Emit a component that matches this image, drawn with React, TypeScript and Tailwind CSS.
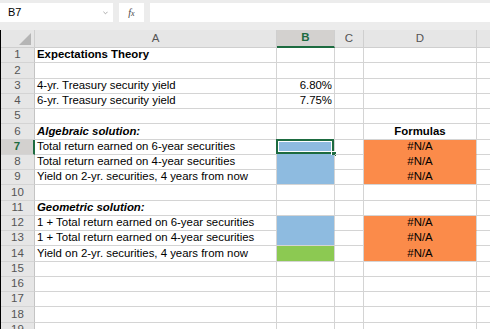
import React from 'react';

type Cell = { text?: string; bold?: boolean; italic?: boolean; align?: 'left' | 'right' | 'center'; fill?: string };
type Row = { a?: Cell; b?: Cell; c?: Cell; d?: Cell };

const BLUE = '#8ebbe0';
const ORANGE = '#fb8b4a';
const GREEN = '#8cc952';

const rows: Row[] = [
  { a: { text: 'Expectations Theory', bold: true } },
  {},
  { a: { text: '4-yr. Treasury security yield' }, b: { text: '6.80%', align: 'right' } },
  { a: { text: '6-yr. Treasury security yield' }, b: { text: '7.75%', align: 'right' } },
  {},
  { a: { text: 'Algebraic solution:', bold: true, italic: true }, d: { text: 'Formulas', bold: true, align: 'center' } },
  { a: { text: 'Total return earned on 6-year securities' }, b: { fill: BLUE }, d: { text: '#N/A', align: 'center', fill: ORANGE } },
  { a: { text: 'Total return earned on 4-year securities' }, b: { fill: BLUE }, d: { text: '#N/A', align: 'center', fill: ORANGE } },
  { a: { text: 'Yield on 2-yr. securities, 4 years from now' }, b: { fill: BLUE }, d: { text: '#N/A', align: 'center', fill: ORANGE } },
  {},
  { a: { text: 'Geometric solution:', bold: true, italic: true } },
  { a: { text: '1 + Total return earned on 6-year securities' }, b: { fill: BLUE }, d: { text: '#N/A', align: 'center', fill: ORANGE } },
  { a: { text: '1 + Total return earned on 4-year securities' }, b: { fill: BLUE }, d: { text: '#N/A', align: 'center', fill: ORANGE } },
  { a: { text: 'Yield on 2-yr. securities, 4 years from now' }, b: { fill: GREEN }, d: { text: '#N/A', align: 'center', fill: ORANGE } },
  {},
  {},
  {},
  {},
  {},
];

function SheetCell({ cell, nextFill, selected }: { cell?: Cell; nextFill?: string; selected?: boolean }) {
  const fill = cell?.fill;
  const hideBottom = fill && nextFill === fill;
  return (
    <div
      className={`relative h-[15.25px] border-r border-b border-[#d4d4d4] px-[2px] flex items-center overflow-visible whitespace-nowrap text-[11.4px] leading-none text-black ${
        cell?.align === 'right' ? 'justify-end' : cell?.align === 'center' ? 'justify-center' : 'justify-start'
      } ${cell?.bold ? 'font-bold' : ''} ${cell?.italic ? 'italic' : ''}`}
      style={{ backgroundColor: fill, borderBottomColor: hideBottom ? fill : undefined }}
    >
      {cell?.text}
      {selected && (
        <>
          <div className="absolute -left-[1px] -top-[1px] right-0 bottom-0 border-2 border-[#1d6b40]">
            <div className="w-full h-full border border-white" />
          </div>
          <div className="absolute -right-[3px] -bottom-[3px] w-[6px] h-[6px] bg-[#1d6b40] border border-white" />
        </>
      )}
    </div>
  );
}

export default function App() {
  return (
    <div className="w-[490px] h-[329px] overflow-hidden bg-white font-['Liberation_Sans',Arial,sans-serif]">
      {/* formula bar */}
      <div className="h-[30px] bg-[#ececec] flex items-start pt-[3px] gap-[6px]">
        <div className="w-[113px] h-[19px] bg-white flex items-center justify-between pl-[8px] pr-[4px]">
          <span className="text-[11px] text-black">B7</span>
          <svg width="5" height="4" viewBox="0 0 6 4" className="mr-[1px]">
            <path d="M0.5 0.5 L3 3 L5.5 0.5" fill="none" stroke="#9a9a9a" strokeWidth="1" />
          </svg>
        </div>
        <div className="w-[25px] h-[19px] bg-white flex items-center justify-center">
          <span className="text-[10px] italic text-[#444] font-['Liberation_Serif',serif]">f<span className="text-[8px]">x</span></span>
        </div>
        <div className="flex-1 h-[19px] bg-white" />
      </div>

      {/* grid */}
      <div className="grid grid-cols-[34px_242px_58px_29px_113px_1fr] border-l border-black">
        {/* header row */}
        <div className="h-[18px] bg-[#e6e6e6] border-r border-b border-[#cfcfcf] relative">
          <svg width="12" height="12" viewBox="0 0 12 12" className="absolute right-[3px] bottom-[2px]">
            <path d="M12 0 L12 12 L0 12 Z" fill="#b5b5b5" />
          </svg>
        </div>
        <div className="h-[18px] bg-[#e6e6e6] border-r border-b border-[#cfcfcf] flex items-center justify-center text-[11.5px] text-[#555]">A</div>
        <div className="h-[18px] bg-[#d3d1cf] border-r border-[#cfcfcf] border-b-2 border-b-[#1d6b40] flex items-center justify-center text-[11.5px] font-bold text-[#1d6b40]">B</div>
        <div className="h-[18px] bg-[#e6e6e6] border-r border-b border-[#cfcfcf] flex items-center justify-center text-[11.5px] text-[#555]">C</div>
        <div className="h-[18px] bg-[#e6e6e6] border-r border-b border-[#cfcfcf] flex items-center justify-center text-[11.5px] text-[#555]">D</div>
        <div className="h-[18px] bg-[#e6e6e6] border-b border-[#cfcfcf]" />

        {rows.map((r, i) => {
          const next = rows[i + 1] || {};
          const sel = i === 6;
          return (
            <React.Fragment key={i}>
              <div
                className={`h-[15.25px] flex items-center justify-center text-[11.5px] leading-none border-b border-[#d4d4d4] ${
                  sel ? 'bg-[#d3d1cf] text-[#1d6b40] font-bold border-r-2 border-r-[#1d6b40]' : 'bg-[#e6e6e6] text-[#555] border-r border-r-[#c4c4c4]'
                }`}
              >
                {i + 1}
              </div>
              <SheetCell cell={r.a} nextFill={next.a?.fill} />
              <SheetCell cell={r.b} nextFill={next.b?.fill} selected={sel} />
              <SheetCell cell={r.c} nextFill={next.c?.fill} />
              <SheetCell cell={r.d} nextFill={next.d?.fill} />
              <div className="h-[15.25px] border-b border-[#d4d4d4]" />
            </React.Fragment>
          );
        })}
        <div className="h-[15px] bg-[#e6e6e6] border-r border-[#c4c4c4] flex items-start justify-center text-[11.5px] text-[#555]">19</div>
        <div className="h-[15px] border-r border-[#d4d4d4]" />
        <div className="h-[15px] border-r border-[#d4d4d4]" />
        <div className="h-[15px] border-r border-[#d4d4d4]" />
        <div className="h-[15px] border-r border-[#d4d4d4]" />
        <div className="h-[15px]" />
      </div>
    </div>
  );
}
